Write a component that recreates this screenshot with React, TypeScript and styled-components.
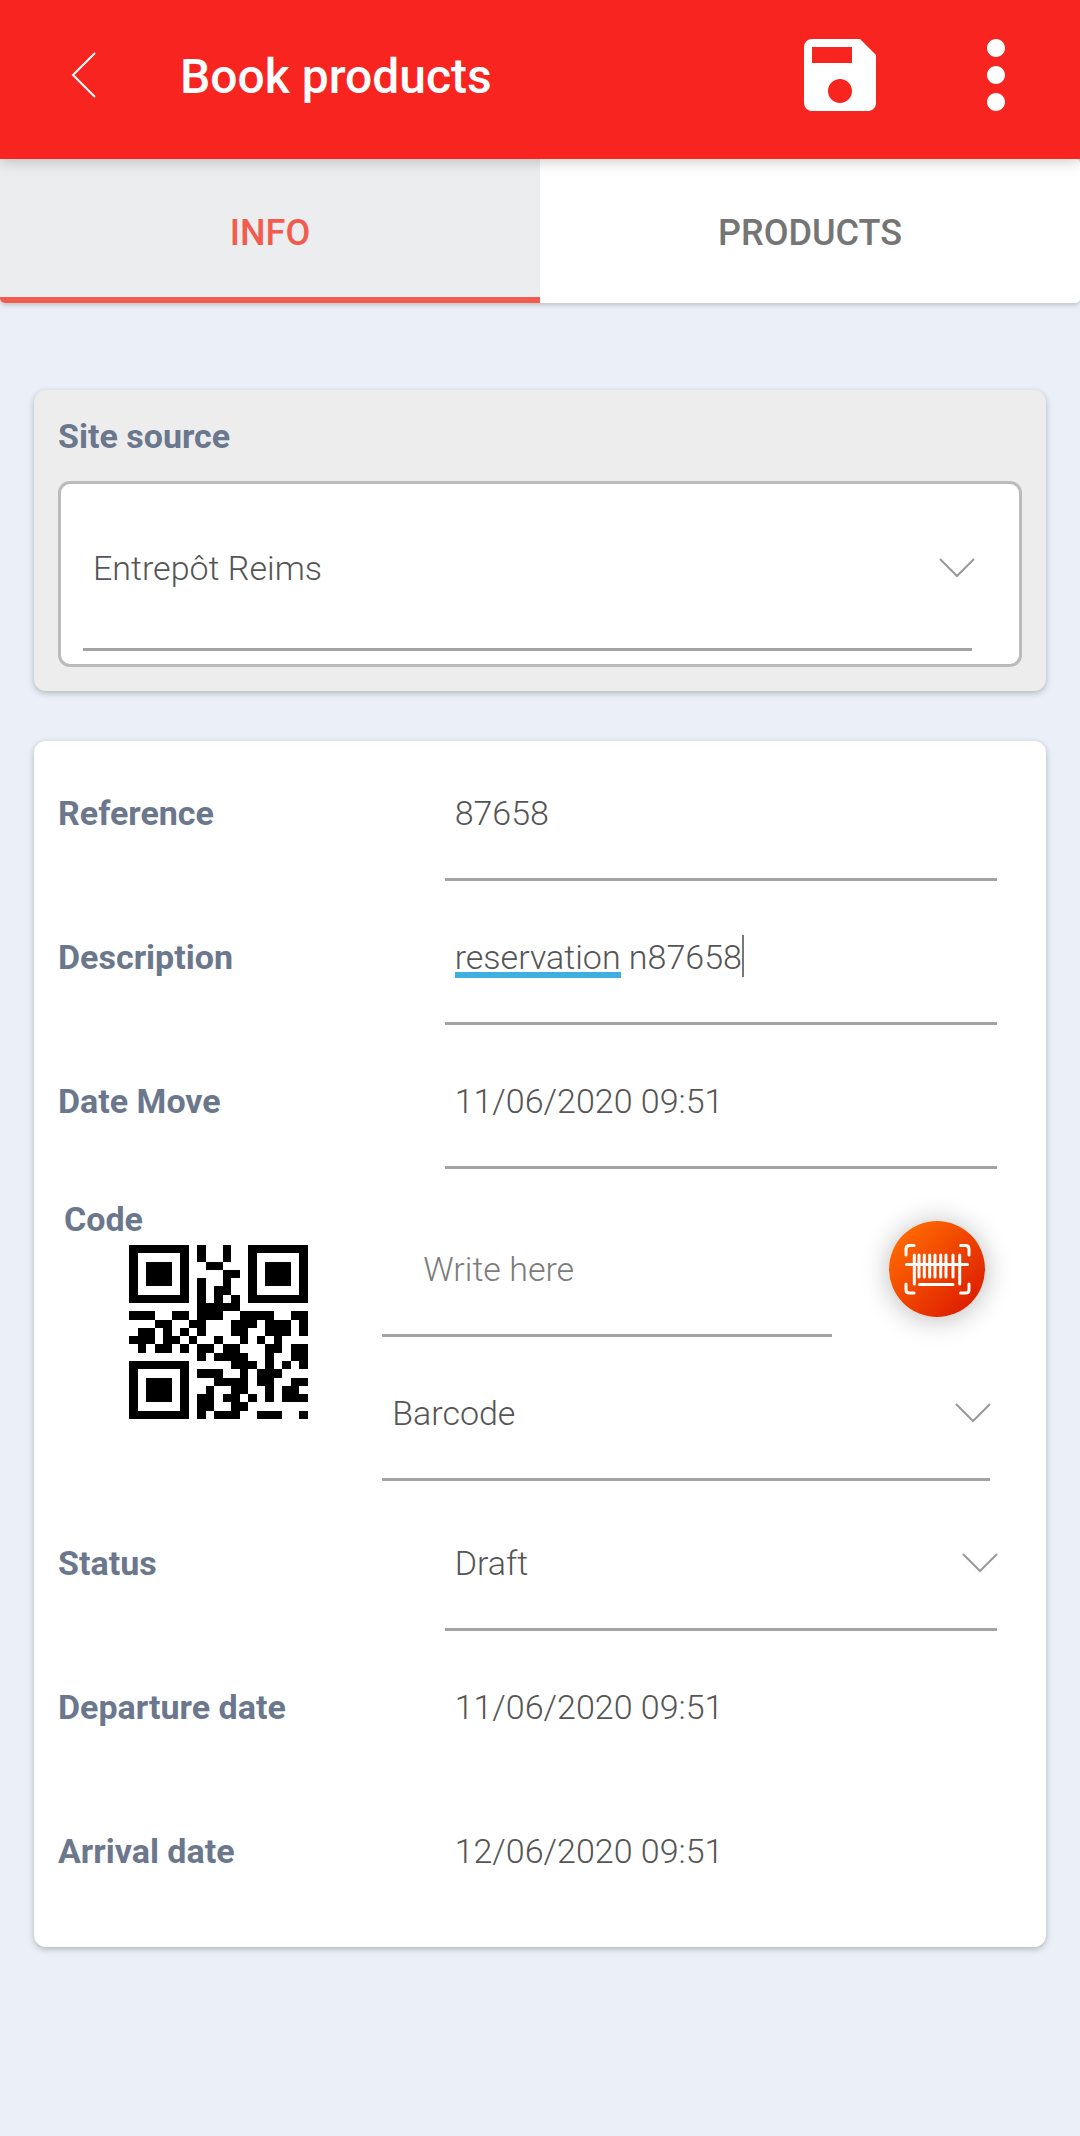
import React, { useLayoutEffect, useState } from 'react';
import styled, { createGlobalStyle } from 'styled-components';
import { MdMoreVert, MdSave } from 'react-icons/md';

const FONT = 'Roboto, "Noto Sans", sans-serif';
const VALUE_SIZE = 34;
const VALUE_WEIGHT = 300;

const GlobalStyle = createGlobalStyle`
  *, *::before, *::after { box-sizing: border-box; }
  body {
    margin: 0;
    background: #ebf0f8;
    font-family: ${FONT};
    color: #555555;
  }
  button, input, select { font-family: inherit; color: inherit; }
`;

const Page = styled.div`
  min-height: 100vh;
  display: flex;
  flex-direction: column;
`;

const AppBar = styled.header`
  position: relative;
  z-index: 1;
  display: flex;
  align-items: center;
  height: 159px;
  padding: 0 30px 10px 36px;
  background: #f82420;
  color: #ffffff;
  box-shadow: 0 2px 14px rgba(0, 0, 0, 0.22);
`;

const IconButton = styled.button`
  display: flex;
  align-items: center;
  justify-content: center;
  min-width: 96px;
  height: 108px;
  padding: 0;
  border: 0;
  background: none;
`;

const Title = styled.h1`
  flex: 1;
  margin: 0;
  padding: 4px 0 0 48px;
  font-size: 48px;
  font-weight: 500;
  line-height: 56px;
`;

const Actions = styled.div`
  display: flex;
  gap: 54px;
`;

const Tabs = styled.nav`
  display: grid;
  grid-template-columns: 1fr 1fr;
  height: 144px;
  border-radius: 5px;
  overflow: hidden;
  background: #ffffff;
  box-shadow: 0 2px 5px rgba(0, 0, 0, 0.2);
`;

const Tab = styled.button<{ $active?: boolean }>`
  padding: ${(p) => (p.$active ? '10px 0 0' : '4px 0 0')};
  border: 0;
  border-bottom: ${(p) => (p.$active ? '6px solid #f25c4e' : '0')};
  background: ${(p) => (p.$active ? '#ecedee' : '#ffffff')};
  color: ${(p) => (p.$active ? '#f25c4e' : '#757575')};
  font-size: 36px;
  font-weight: 500;
`;

const Content = styled.main`
  display: flex;
  flex-direction: column;
  gap: 50px;
  padding: 87px 34px;
`;

const Card = styled.section<{ $muted?: boolean }>`
  padding: 0 24px 24px;
  border-radius: 12px;
  background: ${(p) => (p.$muted ? '#ededed' : '#ffffff')};
  box-shadow: 0 2px 6px rgba(0, 0, 0, 0.26);
`;

const Label = styled.label`
  color: #6b778d;
  font-size: 34px;
  font-weight: 700;
  line-height: 40px;
`;

const CardHeading = styled.div`
  display: flex;
  align-items: center;
  height: 91px;
`;

const SelectFrame = styled.div`
  padding: 0 47px 13px 22px;
  border: 3px solid #bbbbbb;
  border-radius: 12px;
  background: #ffffff;
`;

const Row = styled.div`
  display: grid;
  grid-template-columns: 7fr 10fr;
  align-items: center;
  height: 144px;
  padding-right: 25px;
`;

const FieldWrap = styled.div`
  position: relative;
  flex: 1;
  min-width: 0;
  padding-bottom: 4px;
`;

const Input = styled.input<{ $plain?: boolean; $indent?: number }>`
  display: block;
  width: 100%;
  height: 140px;
  padding: 7px 0 0 ${(p) => p.$indent ?? 10}px;
  border: 0;
  border-bottom: 3px solid ${(p) => (p.$plain ? 'transparent' : '#a3a3a3')};
  border-radius: 0;
  outline: 0;
  background: transparent;
  font-size: ${VALUE_SIZE}px;
  font-weight: ${VALUE_WEIGHT};
  &::placeholder { color: #7c7c7c; opacity: 1; }
`;

const SelectWrap = styled.div`
  position: relative;
`;

const Select = styled.select<{ $tall?: boolean }>`
  display: block;
  appearance: none;
  width: 100%;
  height: ${(p) => (p.$tall ? 167 : 140)}px;
  padding: ${(p) => (p.$tall ? 4 : 7)}px 48px 0 10px;
  border: 0;
  border-bottom: 3px solid #a3a3a3;
  border-radius: 0;
  outline: 0;
  background: transparent;
  font-size: ${VALUE_SIZE}px;
  font-weight: ${VALUE_WEIGHT};
`;

const Chevron = styled.svg<{ $tall?: boolean }>`
  position: absolute;
  right: ${(p) => (p.$tall ? -3 : -1)}px;
  top: calc(50% - ${(p) => (p.$tall ? 10 : 8)}px);
  pointer-events: none;
`;

const SpellingMark = styled.span`
  position: absolute;
  left: 10px;
  top: 87px;
  height: 6px;
  background: #3db0e0;
`;

const Caret = styled.span`
  position: absolute;
  top: 50px;
  width: 2px;
  height: 42px;
  background: #777777;
`;

const CodeBlock = styled.div`
  display: grid;
  grid-template-columns: 8fr 15fr;
  padding: 24px 32px 6px 0;
`;

const CodeAside = styled.div`
  display: flex;
  flex-direction: column;
  align-items: flex-start;
  padding: 2px 0 0 6px;
`;

const QrCode = styled.svg`
  width: 179px;
  height: 174px;
  margin: 6px 0 0 65px;
`;

const CodeFields = styled.div`
  display: flex;
  flex-direction: column;
`;

const ScanRow = styled.div`
  display: flex;
  align-items: center;
  gap: 57px;
  padding-right: 5px;
`;

const ScanButton = styled.button`
  width: 96px;
  height: 96px;
  padding: 0;
  border: 0;
  border-radius: 50%;
  background: linear-gradient(135deg, #ff6a00 12%, #dd1c00 90%);
  box-shadow: 0 2px 28px rgba(0, 0, 0, 0.28);
`;

const QR_ROWS = [
  '111111101001001111111',
  '100000101001001000001',
  '101110100110001011101',
  '101110100001101011101',
  '101110101001001011101',
  '100000101011001000001',
  '111111101010101111111',
  '000000001111100000000',
  '111001101110011110011',
  '000110011000111011101',
  '011010101000110011101',
  '111011010010010101000',
  '010110101101100011011',
  '000000001011110010011',
  '111111100000111010101',
  '100000101110010111000',
  '101110100011110110011',
  '101110100100110010110',
  '101110101101101010111',
  '100000101100110000000',
  '111111101011100111001',
];

function Qr() {
  const d = QR_ROWS.flatMap((row, y) =>
    Array.from(row.matchAll(/1+/g), (run) => `M${run.index} ${y}h${run[0].length}v1h-${run[0].length}z`),
  ).join('');
  return (
    <QrCode viewBox="0 0 21 21" preserveAspectRatio="none" role="img" aria-label="QR">
      <path d={d} fill="#000" shapeRendering="crispEdges" />
    </QrCode>
  );
}

function BarcodeIcon() {
  return (
    <svg width="96" height="96" viewBox="0 0 96 96" fill="none" stroke="#fff" strokeWidth="3" strokeLinecap="round" aria-hidden="true">
      <path d="M17 34v-6q0-3.500 3.500-3.500H25M71.500 24.500H76.500q3.500 0 3.500 3.500v6M17 63v6q0 3 3.500 3H25M71.500 72H76.500q3.500 0 3.500-3v-6" />
      <path d="M25.300 34v29M70.700 34v29" />
      <path d="M30 34v22M35.300 34v22M40.700 34v22M46 34v22M51.700 34v22M57 34v22M64 34v22" />
      <path d="M17.500 43.500h61M30.500 63.500h33.500" />
    </svg>
  );
}

function SelectField(props: { id: string; value: string; tall?: boolean; label?: string }) {
  return (
    <SelectWrap>
      <Select id={props.id} $tall={props.tall} aria-label={props.label} defaultValue={props.value}>
        <option>{props.value}</option>
      </Select>
      <Chevron $tall={props.tall} width="36" height="20" viewBox="0 0 36 20" fill="none" stroke="#999999" strokeWidth="2" aria-hidden="true">
        <path d="M1 1l17 17L35 1" />
      </Chevron>
    </SelectWrap>
  );
}

function textWidth(text: string) {
  const ctx = document.createElement('canvas').getContext('2d');
  if (!ctx) return 0;
  ctx.font = `${VALUE_WEIGHT} ${VALUE_SIZE}px ${FONT}`;
  return Math.round(ctx.measureText(text).width);
}

function DescriptionField({ id }: { id: string }) {
  const [value, setValue] = useState('reservation n87658');
  const [widths, setWidths] = useState({ word: 0, all: 0 });
  useLayoutEffect(() => {
    setWidths({ word: textWidth(value.split(' ')[0]), all: textWidth(value) });
  }, [value]);
  return (
    <FieldWrap>
      <Input id={id} value={value} spellCheck={false} onChange={(e) => setValue(e.target.value)} />
      <SpellingMark style={{ width: widths.word }} />
      <Caret style={{ left: widths.all + 10 }} />
    </FieldWrap>
  );
}

function TextRow(props: { id: string; label: string; value: string; plain?: boolean }) {
  return (
    <Row>
      <Label htmlFor={props.id}>{props.label}</Label>
      <FieldWrap>
        <Input id={props.id} defaultValue={props.value} $plain={props.plain} />
      </FieldWrap>
    </Row>
  );
}

export default function App() {
  return (
    <Page>
      <GlobalStyle />
      <AppBar>
        <IconButton aria-label="Back">
          <svg width="26" height="46" viewBox="0 0 26 46" fill="none" stroke="#fff" strokeWidth="2" aria-hidden="true">
            <path d="M24 1L2 23l22 22" />
          </svg>
        </IconButton>
        <Title>Book products</Title>
        <Actions>
          <IconButton aria-label="Save"><MdSave size={96} /></IconButton>
          <IconButton aria-label="More"><MdMoreVert size={108} /></IconButton>
        </Actions>
      </AppBar>
      <Tabs>
        <Tab $active>INFO</Tab>
        <Tab>PRODUCTS</Tab>
      </Tabs>
      <Content>
        <Card $muted>
          <CardHeading><Label htmlFor="site">Site source</Label></CardHeading>
          <SelectFrame><SelectField id="site" value="Entrepôt Reims" tall /></SelectFrame>
        </Card>
        <Card>
          <TextRow id="reference" label="Reference" value="87658" />
          <Row>
            <Label htmlFor="description">Description</Label>
            <DescriptionField id="description" />
          </Row>
          <TextRow id="date-move" label="Date Move" value="11/06/2020 09:51" />
          <CodeBlock>
            <CodeAside>
              <Label htmlFor="code">Code</Label>
              <Qr />
            </CodeAside>
            <CodeFields>
              <ScanRow>
                <FieldWrap><Input id="code" placeholder="Write here" $indent={41} /></FieldWrap>
                <ScanButton aria-label="Scan"><BarcodeIcon /></ScanButton>
              </ScanRow>
              <FieldWrap><SelectField id="code-type" value="Barcode" label="Code type" /></FieldWrap>
            </CodeFields>
          </CodeBlock>
          <Row>
            <Label htmlFor="status">Status</Label>
            <FieldWrap><SelectField id="status" value="Draft" /></FieldWrap>
          </Row>
          <TextRow id="departure" label="Departure date" value="11/06/2020 09:51" plain />
          <TextRow id="arrival" label="Arrival date" value="12/06/2020 09:51" plain />
        </Card>
      </Content>
    </Page>
  );
}
